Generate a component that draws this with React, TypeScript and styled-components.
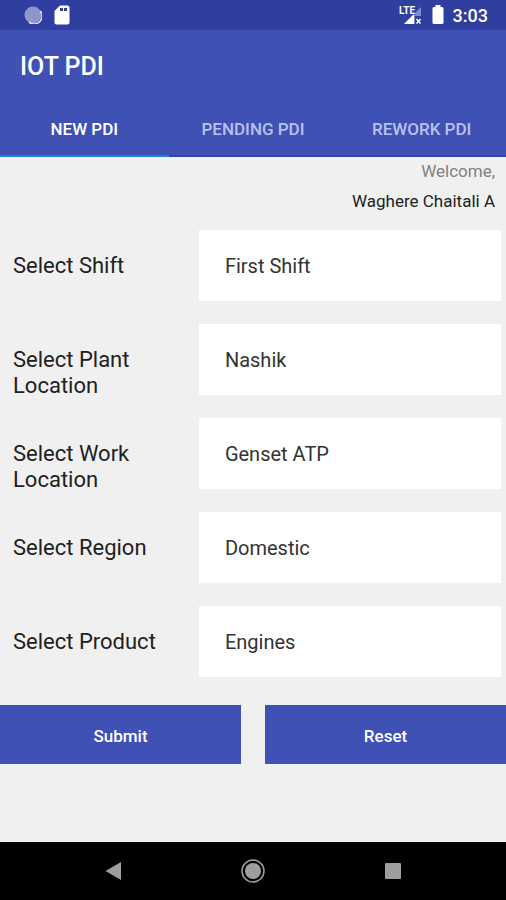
import React, { useState } from "react";
import styled, { createGlobalStyle } from "styled-components";

const GlobalStyle = createGlobalStyle`
  *, *::before, *::after { box-sizing: border-box; }
  body { margin: 0; background: #f0f0f0; }
  body, button, select { font-family: Roboto, "Liberation Sans", sans-serif; }
`;

const Screen = styled.div`
  min-height: 100vh;
  display: flex;
  flex-direction: column;
  background: #f0f0f0;
  color: #212121;
`;

const StatusBar = styled.div`
  height: 30px;
  padding: 0 18px 0 24px;
  display: flex;
  align-items: center;
  justify-content: space-between;
  background: #303f9f;
  color: #fff;
`;

const StatusGroup = styled.div<{ $gap: number }>`
  display: flex;
  align-items: center;
  gap: ${(p) => p.$gap}px;
`;

const Clock = styled.time`
  padding-top: 2px;
  font-size: 18px;
  line-height: 24px;
  font-weight: 500;
`;

const Icon = styled.svg`
  display: block;
  flex: none;
`;

const AppBar = styled.header`
  background: #3f51b5;
  color: #fff;
`;

const Title = styled.h1`
  margin: 0;
  padding: 21px 20px 18px;
  font-size: 25px;
  line-height: 32px;
  font-weight: 500;
`;

const TabList = styled.div`
  display: grid;
  grid-template-columns: repeat(3, 1fr);
`;

const Tab = styled.button<{ $active: boolean }>`
  height: 56px;
  padding: 2px 0 0;
  border: 0;
  border-bottom: 2px solid ${(p) => (p.$active ? "#1b86cf" : "#3643ab")};
  background: transparent;
  color: ${(p) => (p.$active ? "#fff" : "#b9c1ea")};
  font-size: 17px;
  font-weight: 500;
  cursor: pointer;
`;

const Main = styled.main`
  flex: 1;
  padding-bottom: 24px;
`;

const Welcome = styled.div`
  display: flex;
  flex-direction: column;
  gap: 2px;
  padding: 0 11px 0 12px;
  text-align: right;
`;

const WelcomeLine = styled.p<{ $muted?: boolean }>`
  margin: 0;
  font-size: 17px;
  line-height: 28px;
  color: ${(p) => (p.$muted ? "#808080" : "#212121")};
`;

const Form = styled.form`
  padding-top: 15px;
`;

const Fields = styled.div`
  display: flex;
  flex-direction: column;
  gap: 23px;
  padding: 0 5px 0 13px;
`;

const Field = styled.div`
  display: grid;
  grid-template-columns: 8fr 13fr;
  align-items: start;
  height: 71px;
`;

const Label = styled.label`
  padding: 23px 24px 0 0;
  font-size: 22px;
  line-height: 26px;
`;

const Select = styled.select`
  appearance: none;
  width: 100%;
  height: 71px;
  padding: 0 26px;
  border: 0;
  border-radius: 0;
  background: #fff;
  color: #333;
  font-size: 20px;
`;

const Actions = styled.div`
  display: grid;
  grid-template-columns: 1fr 1fr;
  gap: 24px;
  padding-top: 28px;
`;

const ActionButton = styled.button`
  height: 59px;
  padding: 2px 0 0;
  border: 0;
  background: #3f51b5;
  color: #fff;
  font-size: 17px;
  font-weight: 500;
  cursor: pointer;
`;

const NavBar = styled.nav`
  height: 58px;
  padding: 0 100px;
  display: flex;
  align-items: center;
  justify-content: space-between;
  background: #000;
`;

const NavButton = styled.button`
  padding: 0;
  border: 0;
  background: transparent;
  cursor: pointer;
`;

const tabs = ["NEW PDI", "PENDING PDI", "REWORK PDI"];

const fields = [
  { id: "shift", label: "Select Shift", value: "First Shift" },
  { id: "plant", label: "Select Plant Location", value: "Nashik" },
  { id: "work", label: "Select Work Location", value: "Genset ATP" },
  { id: "region", label: "Select Region", value: "Domestic" },
  { id: "product", label: "Select Product", value: "Engines" },
];

const SyncIcon = () => (
  <Icon width="18" height="18" viewBox="0 0 18 18" aria-hidden="true">
    <circle cx="9" cy="9" r="8.5" fill="#8e97cd" />
    <path d="M16.300 5A8 8 0 0 1 5 16.200" fill="none" stroke="#dfe3f6" strokeWidth="1.500" />
  </Icon>
);

const SdCardIcon = () => (
  <Icon width="16" height="20" viewBox="0 0 16 20" aria-hidden="true">
    <path d="M6 .5h7.500a2 2 0 0 1 2 2v15a2 2 0 0 1-2 2h-11a2 2 0 0 1-2-2V6z" fill="#fff" />
    <path d="M6 3h3v3H6zM10 3h3v3h-3z" fill="#303f9f" />
  </Icon>
);

const SignalIcon = () => (
  <Icon width="24" height="20" viewBox="0 0 24 20" role="img" aria-label="LTE signal">
    <path d="M22 2v9h-6v8H5z" fill="#7f8ac6" />
    <path d="M15 9v10H5z" fill="#fff" />
    <text x="0" y="9" fill="#fff" stroke="#303f9f" strokeWidth="1" paintOrder="stroke" fontFamily="Roboto, sans-serif" fontSize="10" fontWeight="700" textAnchor="start">LTE</text>
    <path d="M17.500 14l4 4.500M21.500 14l-4 4.500" stroke="#fff" strokeWidth="1.500" />
  </Icon>
);

const BatteryIcon = () => (
  <Icon width="12" height="20" viewBox="0 0 12 20" aria-hidden="true">
    <path d="M3.500 0h5v2H10a1.500 1.500 0 0 1 1.500 1.500v14A1.500 1.500 0 0 1 10 19H2a1.500 1.500 0 0 1-1.500-1.500v-14A1.500 1.500 0 0 1 2 2h1.500z" fill="#fff" />
  </Icon>
);

export default function App() {
  const [active, setActive] = useState(0);
  return (
    <>
      <GlobalStyle />
      <Screen>
        <StatusBar>
          <StatusGroup $gap={12}>
            <SyncIcon />
            <SdCardIcon />
          </StatusGroup>
          <StatusGroup $gap={9}>
            <SignalIcon />
            <BatteryIcon />
            <Clock>3:03</Clock>
          </StatusGroup>
        </StatusBar>
        <AppBar>
          <Title>IOT PDI</Title>
          <TabList role="tablist">
            {tabs.map((name, i) => (
              <Tab
                key={name}
                type="button"
                role="tab"
                aria-selected={i === active}
                $active={i === active}
                onClick={() => setActive(i)}
              >
                {name}
              </Tab>
            ))}
          </TabList>
        </AppBar>
        <Main>
          <Welcome>
            <WelcomeLine $muted>Welcome,</WelcomeLine>
            <WelcomeLine>Waghere Chaitali A</WelcomeLine>
          </Welcome>
          <Form onSubmit={(e) => e.preventDefault()}>
            <Fields>
              {fields.map((f) => (
                <Field key={f.id}>
                  <Label htmlFor={f.id}>{f.label}</Label>
                  <Select id={f.id} name={f.id} defaultValue={f.value}>
                    <option>{f.value}</option>
                  </Select>
                </Field>
              ))}
            </Fields>
            <Actions>
              <ActionButton type="submit">Submit</ActionButton>
              <ActionButton type="reset">Reset</ActionButton>
            </Actions>
          </Form>
        </Main>
        <NavBar aria-label="System navigation">
          <NavButton type="button" aria-label="Back">
            <Icon width="26" height="26" viewBox="0 0 26 26">
              <path d="M21 4v18L5.500 13z" fill="#9e9e9e" />
            </Icon>
          </NavButton>
          <NavButton type="button" aria-label="Home">
            <Icon width="26" height="26" viewBox="0 0 26 26">
              <circle cx="13" cy="13" r="8" fill="#9e9e9e" />
              <circle cx="13" cy="13" r="11" fill="none" stroke="#9e9e9e" strokeWidth="1.500" />
            </Icon>
          </NavButton>
          <NavButton type="button" aria-label="Recent apps">
            <Icon width="26" height="26" viewBox="0 0 26 26">
              <rect x="5" y="5" width="16" height="16" rx="1" fill="#9e9e9e" />
            </Icon>
          </NavButton>
        </NavBar>
      </Screen>
    </>
  );
}
